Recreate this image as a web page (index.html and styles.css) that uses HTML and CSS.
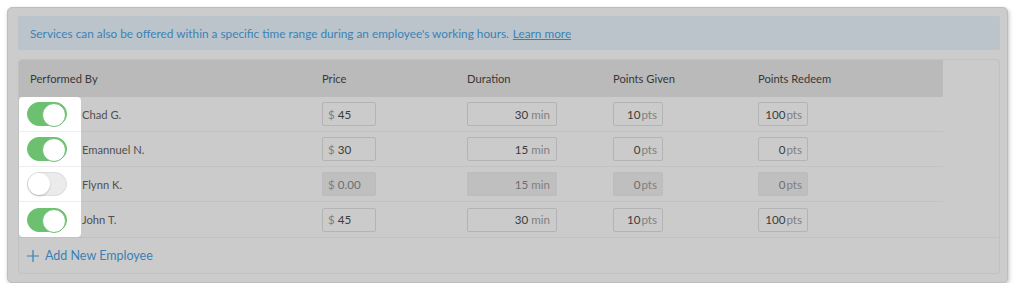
FILE: index.html
```html
<!DOCTYPE html>
<html lang="en">
<head>
  <meta charset="UTF-8" />
  <title>Service Staff</title>
  <link rel="stylesheet" href="styles.css">
</head>
<body>
  <div class="card">
    <div class="notice">
      Services can also be offered within a specific time range during an employee's working hours. <a href="#">Learn more</a>
    </div>

    <div class="staff">
      <div class="row head">
        <div class="who">Performed By</div>
        <div>Price</div>
        <div>Duration</div>
        <div>Points Given</div>
        <div>Points Redeem</div>
      </div>

      <div class="row">
        <div class="sw-cell first"><span class="switch on"></span></div>
        <div class="name">Chad G.</div>
        <div><span class="box price"><i>$</i>45</span></div>
        <div><span class="box dur">30<i>min</i></span></div>
        <div><span class="box pts">10<i>pts</i></span></div>
        <div><span class="box pts">100<i>pts</i></span></div>
      </div>

      <div class="row">
        <div class="sw-cell"><span class="switch on"></span></div>
        <div class="name">Emannuel N.</div>
        <div><span class="box price"><i>$</i>30</span></div>
        <div><span class="box dur">15<i>min</i></span></div>
        <div><span class="box pts">0<i>pts</i></span></div>
        <div><span class="box pts">0<i>pts</i></span></div>
      </div>

      <div class="row off">
        <div class="sw-cell"><span class="switch"></span></div>
        <div class="name">Flynn K.</div>
        <div><span class="box price"><i>$</i>0.00</span></div>
        <div><span class="box dur">15<i>min</i></span></div>
        <div><span class="box pts">0<i>pts</i></span></div>
        <div><span class="box pts">0<i>pts</i></span></div>
      </div>

      <div class="row last">
        <div class="sw-cell last"><span class="switch on"></span></div>
        <div class="name">John T.</div>
        <div><span class="box price"><i>$</i>45</span></div>
        <div><span class="box dur">30<i>min</i></span></div>
        <div><span class="box pts">10<i>pts</i></span></div>
        <div><span class="box pts">100<i>pts</i></span></div>
      </div>

      <a class="add" href="#">
        <svg width="12" height="12" viewBox="0 0 12 12"><path d="M6 0v12M0 6h12" stroke="currentColor" stroke-width="1.2" fill="none"/></svg>
        Add New Employee
      </a>
    </div>
  </div>
</body>
</html>
```

FILE: styles.css
```css
*{margin:0;padding:0;box-sizing:border-box}
body{font-family:Lato,"Open Sans",sans-serif;font-size:11px;background:#fff;color:#3a3a3a;padding:7px 8px 0 7px}
.card{background:#cccccc;border:1px solid #bdbdbd;border-radius:5px;padding:8px 7px 8px 10px;box-shadow:1px 2px 4px rgba(0,0,0,0.25)}
.notice{background:#bcc4cb;color:#3a82b6;height:34px;padding:0 12px;display:flex;align-items:center;gap:4px;font-size:11.8px;border-radius:2px}
.notice a{color:#3a82b6}
.staff{margin-top:9px;border:1px solid #c1c1c1;border-radius:4px;background:#cbcbcb}
.row{width:924px;display:grid;grid-template-columns:62px 241px 145px 146px 145px 185px;align-items:center;height:35px;border-bottom:1px solid #c2c2c2}
.row.last{border-bottom:none}
.row.head{height:37px;background:#bababa;border-bottom:none;border-radius:3px 0 0 0;color:#383838;font-size:11.2px}
.row.head .who{grid-column:span 2;padding-left:11px}
.sw-cell{background:#fff;display:flex;align-items:center;padding-left:8px;border-bottom:1px solid #eee;margin-bottom:-1px;height:35px}
.sw-cell.first{border-radius:4px 4px 0 0}
.sw-cell.last{border-radius:0 0 4px 4px;border-bottom:none;margin-bottom:0}
.switch{width:40px;height:24px;border-radius:12px;background:#ebebeb;border:1px solid #dcdcdc;position:relative;display:block}
.switch::after{content:"";position:absolute;left:0;top:0;width:22px;height:22px;border-radius:50%;background:#fff;box-shadow:0 1px 2px rgba(0,0,0,0.2)}
.switch.on{background:#6cc070;border-color:#6cc070}
.switch.on::after{left:auto;right:0;box-shadow:none;border:1px solid #6cc070}
.name{color:#505050;padding-left:1px;font-size:11.2px}
.box{display:flex;align-items:center;height:24px;border:1px solid #b4b4b4;border-radius:2px;color:#3c3c3c;font-size:11.6px}
.box i{font-style:normal;color:#808080}
.price{width:54px;padding-left:5px}
.price i{margin-right:3px}
.dur{width:90px;justify-content:flex-end;padding-right:6px}
.dur i{margin-left:3px}
.pts{width:50px;justify-content:flex-end;padding-right:5px}
.pts i{margin-left:1px}
.off .box{background:#bfbfbf;border-color:#bcbcbc;color:#6e6e6e}
.add{display:flex;align-items:center;gap:6px;height:36px;padding-left:8px;color:#3a80b5;text-decoration:none;font-size:12.5px;border-top:1px solid #c2c2c2}
```
